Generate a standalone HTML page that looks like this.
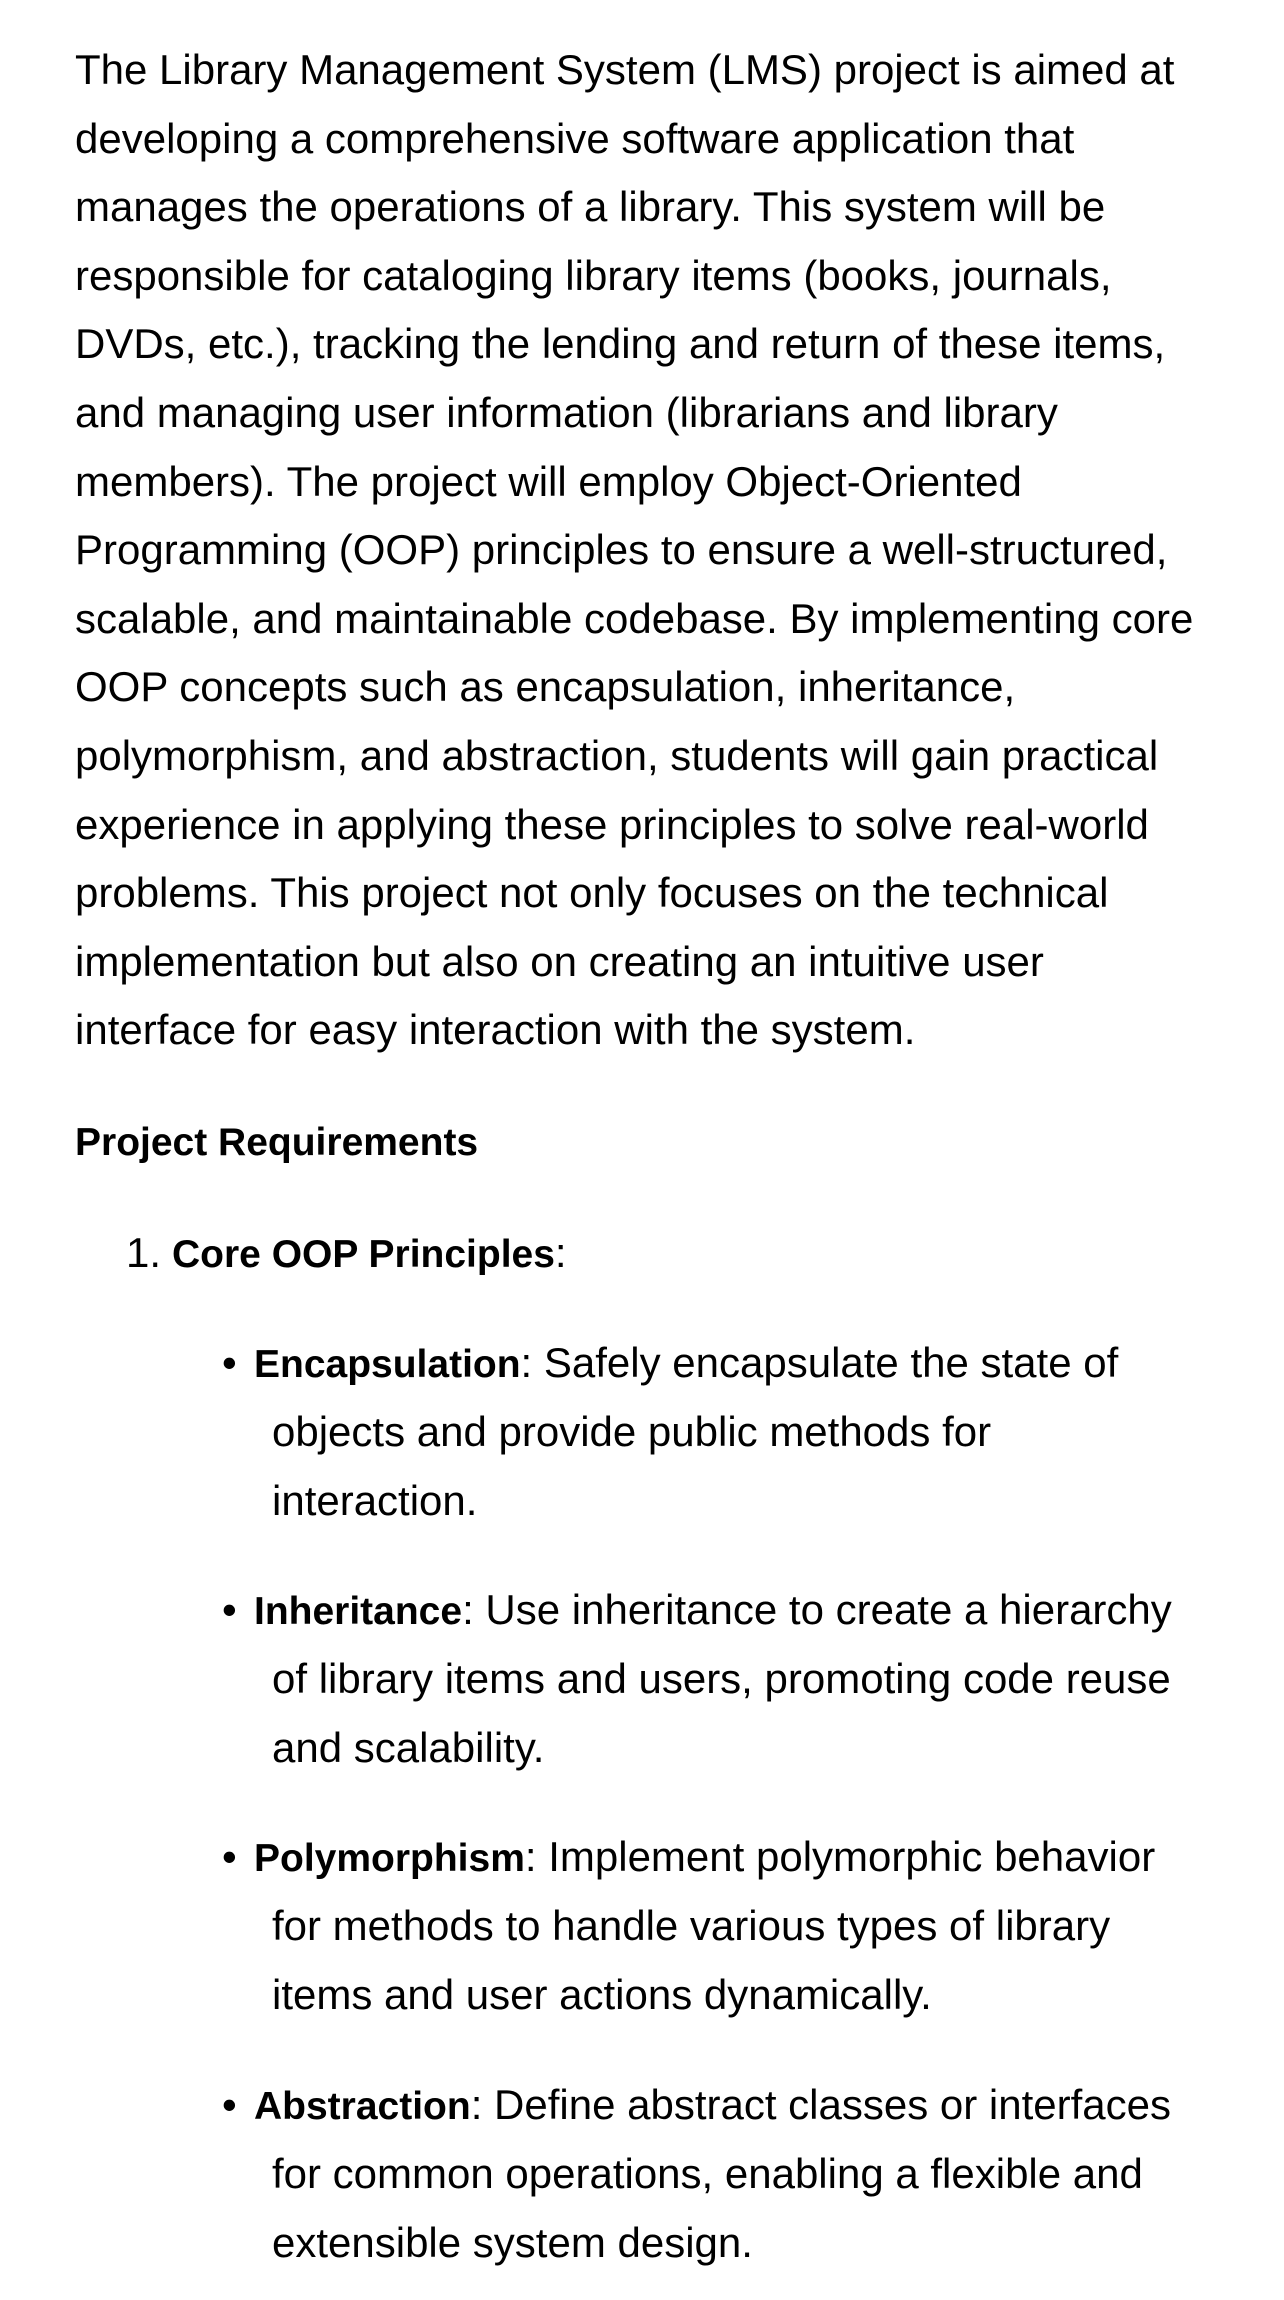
<!DOCTYPE html>
<html><head><meta charset="utf-8"><style>
html,body{margin:0;padding:0;background:#fff;}
body{width:1284px;height:2300px;position:relative;overflow:hidden;font-family:"Liberation Sans",sans-serif;font-size:42px;color:#000;}
.l{position:absolute;white-space:nowrap;line-height:68px;height:68px;}
b{font-weight:bold;font-size:39px;}
</style></head><body>
<div class="l" style="left:75px;top:36px">The Library Management System (LMS) project is aimed at</div>
<div class="l" style="left:75px;top:105px">developing a comprehensive software application that</div>
<div class="l" style="left:75px;top:173px">manages the operations of a library. This system will be</div>
<div class="l" style="left:75px;top:242px">responsible for cataloging library items (books, journals,</div>
<div class="l" style="left:75px;top:310px">DVDs, etc.), tracking the lending and return of these items,</div>
<div class="l" style="left:75px;top:379px">and managing user information (librarians and library</div>
<div class="l" style="left:75px;top:448px">members). The project will employ Object-Oriented</div>
<div class="l" style="left:75px;top:516px">Programming (OOP) principles to ensure a well-structured,</div>
<div class="l" style="left:75px;top:585px">scalable, and maintainable codebase. By implementing core</div>
<div class="l" style="left:75px;top:653px">OOP concepts such as encapsulation, inheritance,</div>
<div class="l" style="left:75px;top:722px">polymorphism, and abstraction, students will gain practical</div>
<div class="l" style="left:75px;top:791px">experience in applying these principles to solve real-world</div>
<div class="l" style="left:75px;top:859px">problems. This project not only focuses on the technical</div>
<div class="l" style="left:75px;top:928px">implementation but also on creating an intuitive user</div>
<div class="l" style="left:75px;top:996px">interface for easy interaction with the system.</div>
<div class="l" style="left:75px;top:1107px"><b>Project Requirements</b></div>
<div class="l" style="left:126px;top:1219px">1.</div>
<div class="l" style="left:172px;top:1219px"><b>Core OOP Principles</b>:</div>
<div class="l" style="left:222px;top:1329px">•</div>
<div class="l" style="left:254px;top:1329px"><b>Encapsulation</b>: Safely encapsulate the state of</div>
<div class="l" style="left:272px;top:1398px">objects and provide public methods for</div>
<div class="l" style="left:272px;top:1467px">interaction.</div>
<div class="l" style="left:222px;top:1576px">•</div>
<div class="l" style="left:254px;top:1576px"><b>Inheritance</b>: Use inheritance to create a hierarchy</div>
<div class="l" style="left:272px;top:1645px">of library items and users, promoting code reuse</div>
<div class="l" style="left:272px;top:1714px">and scalability.</div>
<div class="l" style="left:222px;top:1823px">•</div>
<div class="l" style="left:254px;top:1823px"><b>Polymorphism</b>: Implement polymorphic behavior</div>
<div class="l" style="left:272px;top:1892px">for methods to handle various types of library</div>
<div class="l" style="left:272px;top:1961px">items and user actions dynamically.</div>
<div class="l" style="left:222px;top:2071px">•</div>
<div class="l" style="left:254px;top:2071px"><b>Abstraction</b>: Define abstract classes or interfaces</div>
<div class="l" style="left:272px;top:2140px">for common operations, enabling a flexible and</div>
<div class="l" style="left:272px;top:2209px">extensible system design.</div>
</body></html>
